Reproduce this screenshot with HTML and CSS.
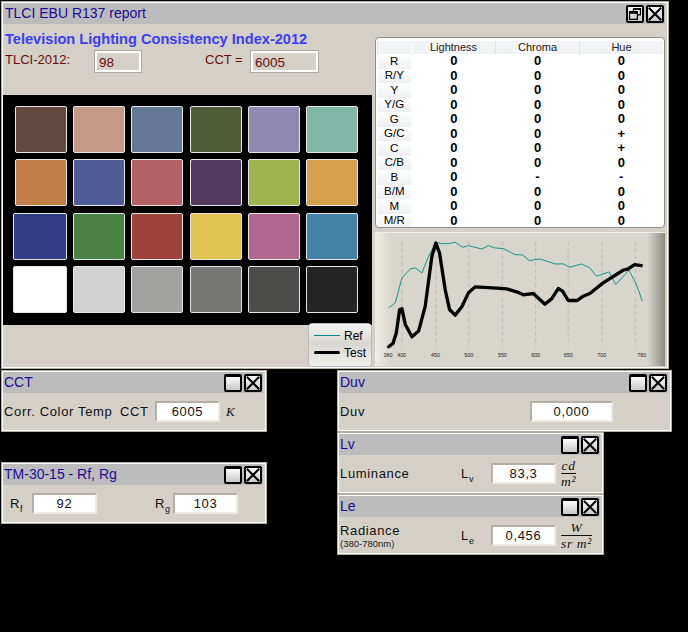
FILE: index.html
```html
<!DOCTYPE html>
<html lang="en">
<head>
    <meta charset="UTF-8">
    <title>TLCI EBU R137 report</title>
    <link rel="stylesheet" href="styles.css">
</head>
<body>

<!-- Main report window -->
<div class="win win-main">
  <div class="titlebar">
    <span class="title">TLCI EBU R137 report</span>
    <span class="btn"><svg viewBox="0 0 18 18"><path d="M7 2h9v8h-4M7 2v3M2 8h10v8H2zM2 8V6h10v2" fill="none" stroke="#000" stroke-width="1.6"/><path d="M7 2h9v2H7zM2 6h10v2H2z"/></svg></span>
    <span class="btn"><svg viewBox="0 0 18 18"><path d="M1 1l16 16M17 1L1 17" stroke="#000" stroke-width="2.6"/></svg></span>
  </div>
  <div class="main-body">
    <div class="left-col">
      <h1 class="heading">Television Lighting Consistency Index-2012</h1>
      <div class="score-row">
        <span class="score-label label-tlci">TLCI-2012:</span>
        <span class="score-box box-tlci">98</span>
        <span class="score-label label-cct">CCT =</span>
        <span class="score-box box-cct">6005</span>
      </div>
      <div class="chart-panel">
        <div class="swatch" style="background:#654b3f"></div>
        <div class="swatch" style="background:#c49a87"></div>
        <div class="swatch" style="background:#647896"></div>
        <div class="swatch" style="background:#4f5c38"></div>
        <div class="swatch" style="background:#8f88b0"></div>
        <div class="swatch" style="background:#80b7a7"></div>
        <div class="swatch" style="background:#c47d46"></div>
        <div class="swatch" style="background:#505c98"></div>
        <div class="swatch" style="background:#b46066"></div>
        <div class="swatch" style="background:#523a60"></div>
        <div class="swatch" style="background:#9fb44e"></div>
        <div class="swatch" style="background:#d4a04c"></div>
        <div class="swatch swatch-wide" style="background:#333c86"></div>
        <div class="swatch" style="background:#4b8246"></div>
        <div class="swatch" style="background:#9e423c"></div>
        <div class="swatch" style="background:#e2c250"></div>
        <div class="swatch" style="background:#b06890"></div>
        <div class="swatch" style="background:#4583a6"></div>
        <div class="swatch swatch-wide" style="background:#ffffff"></div>
        <div class="swatch" style="background:#d0d0d0"></div>
        <div class="swatch" style="background:#a2a2a0"></div>
        <div class="swatch" style="background:#767674"></div>
        <div class="swatch" style="background:#4c4c4a"></div>
        <div class="swatch" style="background:#252525"></div>
      </div>
    </div>
    <div class="right-col">
      <div class="table-panel">
        <table class="delta">
          <tr><th></th><th>Lightness</th><th>Chroma</th><th>Hue</th></tr>
          <tr><th>R</th><td>0</td><td>0</td><td>0</td></tr>
          <tr><th>R/Y</th><td>0</td><td>0</td><td>0</td></tr>
          <tr><th>Y</th><td>0</td><td>0</td><td>0</td></tr>
          <tr><th>Y/G</th><td>0</td><td>0</td><td>0</td></tr>
          <tr><th>G</th><td>0</td><td>0</td><td>0</td></tr>
          <tr><th>G/C</th><td>0</td><td>0</td><td>+</td></tr>
          <tr><th>C</th><td>0</td><td>0</td><td>+</td></tr>
          <tr><th>C/B</th><td>0</td><td>0</td><td>0</td></tr>
          <tr><th>B</th><td>0</td><td>-</td><td>-</td></tr>
          <tr><th>B/M</th><td>0</td><td>0</td><td>0</td></tr>
          <tr><th>M</th><td>0</td><td>0</td><td>0</td></tr>
          <tr><th>M/R</th><td>0</td><td>0</td><td>0</td></tr>
        </table>
      </div>
      <div class="spectrum">
        <svg viewBox="15 10 870 400" width="290" height="133">
          <g stroke="#b4b2ac" stroke-width="2.4" stroke-dasharray="12 9">
            <path d="M95 35V355M197 35V355M296 35V355M397 35V355M497 35V355M595 35V355M697 35V355M797 35V355"/>
          </g>
          <polyline class="line-ref" points="55,235 75,220 95,145 120,118 135,115 155,130 175,80 197,38 215,42 235,42 255,38 278,53 295,48 335,58 355,48 375,55 400,57 435,75 458,76 478,93 510,88 555,103 580,103 600,113 635,103 660,115 680,140 718,127 738,165 778,122 800,165 818,215"/>
          <polyline class="line-test" points="55,352 68,342 78,310 88,240 95,238 105,285 125,322 145,305 165,230 185,80 197,40 208,70 225,180 238,240 255,257 275,232 295,190 315,172 380,176 410,178 440,187 460,196 490,192 525,224 545,208 565,177 578,185 595,213 622,213 640,200 660,192 700,160 760,122 775,118 795,105 815,108"/>
          <g class="axis">
            <text x="53" y="384">380</text><text x="94" y="384">400</text><text x="196" y="384">450</text><text x="296" y="384">500</text><text x="397" y="384">550</text><text x="497" y="384">600</text><text x="595" y="384">650</text><text x="696" y="384">700</text><text x="816" y="384">780</text>
          </g>
        </svg>
      </div>
    </div>
  </div>
  <div class="legend">
    <div class="legend-row"><span class="key key-ref"></span><span>Ref</span></div>
    <div class="legend-row"><span class="key key-test"></span><span>Test</span></div>
  </div>
</div>

<!-- Small measurement windows -->
<div class="win win-cct">
  <div class="titlebar">
    <span class="title">CCT</span>
    <span class="btn btn-max"></span>
    <span class="btn"><svg viewBox="0 0 18 18"><path d="M1 1l16 16M17 1L1 17" stroke="#000" stroke-width="2.6"/></svg></span>
  </div>
  <div class="row">
    <span class="name name-cct">Corr. Color Temp</span>
    <span class="sym sym-cct">CCT</span>
    <span class="field">6005</span>
    <span class="unit-k">K</span>
  </div>
</div>

<div class="win win-tm">
  <div class="titlebar">
    <span class="title">TM-30-15 - Rf, Rg</span>
    <span class="btn btn-max"></span>
    <span class="btn"><svg viewBox="0 0 18 18"><path d="M1 1l16 16M17 1L1 17" stroke="#000" stroke-width="2.6"/></svg></span>
  </div>
  <div class="row">
    <span class="sym sym-rf">R<sub>f</sub></span>
    <span class="field">92</span>
    <span class="sym sym-rg">R<sub>g</sub></span>
    <span class="field">103</span>
  </div>
</div>

<div class="win win-duv">
  <div class="titlebar">
    <span class="title">Duv</span>
    <span class="btn btn-max"></span>
    <span class="btn"><svg viewBox="0 0 18 18"><path d="M1 1l16 16M17 1L1 17" stroke="#000" stroke-width="2.6"/></svg></span>
  </div>
  <div class="row">
    <span class="name name-duv">Duv</span>
    <span class="field field-duv">0,000</span>
  </div>
</div>

<div class="win win-lv">
  <div class="titlebar">
    <span class="title">Lv</span>
    <span class="btn btn-max"></span>
    <span class="btn"><svg viewBox="0 0 18 18"><path d="M1 1l16 16M17 1L1 17" stroke="#000" stroke-width="2.6"/></svg></span>
  </div>
  <div class="row">
    <span class="name name-lum">Luminance</span>
    <span class="sym sym-l">L<sub>v</sub></span>
    <span class="field">83,3</span>
    <span class="frac"><span class="num">cd</span><span>m²</span></span>
  </div>
</div>

<div class="win win-le">
  <div class="titlebar">
    <span class="title">Le</span>
    <span class="btn btn-max"></span>
    <span class="btn"><svg viewBox="0 0 18 18"><path d="M1 1l16 16M17 1L1 17" stroke="#000" stroke-width="2.6"/></svg></span>
  </div>
  <div class="row">
    <span class="name name-lum">Radiance<small>(380-780nm)</small></span>
    <span class="sym sym-l">L<sub>e</sub></span>
    <span class="field">0,456</span>
    <span class="frac"><span class="num">W</span><span>sr m²</span></span>
  </div>
</div>

</body>
</html>
```

FILE: styles.css
```css
body{
  margin:0;
  background-color:#000000;
  font-family:"Liberation Sans",Arial,sans-serif;
  color:#000;
}

/* windows sit on a free desktop */
.win{
  position:absolute;
  box-sizing:border-box;
  background-color:#d4d0c8;
  border:1px solid #fff;
  box-shadow:0 0 0 1px #b3ad9f;
}
.win-main{left:2px;top:2px;width:666px;height:366px;}
.win-cct{left:2px;top:371px;width:264px;height:60px;}
.win-tm{left:2px;top:463px;width:264px;height:60px;}
.win-duv{left:338px;top:371px;width:333px;height:60px;}
.win-lv{left:338px;top:433px;width:265px;height:60px;}
.win-le{left:338px;top:495px;width:265px;height:59px;}

.titlebar{
  display:flex;
  align-items:center;
  gap:2px;
  box-sizing:border-box;
  height:21px;
  margin-right:2px;
  padding:0 1px 0 0;
  background-color:#bcbcbc;
}
.title{
  flex:1;
  padding:0 0 2px 1px;
  font-size:14px;
  color:#1a0a96;
}
.win-main .title{padding-left:2px;}
.btn{
  box-sizing:border-box;
  width:18px;
  height:18px;
  border:2px solid #000;
  border-radius:2px;
  background:linear-gradient(#fdfdfd,#c8c8c8);
}
.btn svg{display:block;width:100%;height:100%;}
.btn-max{border-top-width:3px;}

/* main window */
.main-body{display:flex;gap:3px;}
.left-col{width:369px;}
.heading{
  margin:6px 0 0 2px;
  font-size:14.6px;
  line-height:18px;
  color:#3c3cf5;
}
.score-row{
  display:flex;
  align-items:flex-start;
  height:22px;
  margin-top:2px;
  color:#6a0c0c;
  font-size:13px;
}
.score-label{line-height:19px;}
.label-tlci{margin-left:2px;width:90px;}
.label-cct{margin-left:64px;width:46px;}
.score-box{
  box-sizing:border-box;
  height:21px;
  margin-top:1px;
  padding-left:2px;
  border:2px solid #fff;
  box-shadow:0 0 0 1px #aaa9a4;
  line-height:19px;
  font-size:13.5px;
}
.box-tlci{width:46px;}
.box-cct{width:67px;}

.chart-panel{
  display:grid;
  grid-template-columns:repeat(6,52px);
  grid-auto-rows:47px;
  column-gap:6.2px;
  row-gap:6.3px;
  box-sizing:border-box;
  height:230px;
  margin-top:23px;
  padding:11px 0 0 12px;
  background-color:#000;
}
.swatch{
  box-sizing:border-box;
  border:1px solid #e6e6e6;
  border-radius:2px;
}
.swatch-wide{margin-left:-2px;}

.right-col{width:290px;}
.table-panel{
  box-sizing:border-box;
  height:191px;
  margin-top:13px;
  padding:3px 1px 0;
  background-color:#fff;
  border:1px solid #8d8d8d;
  border-radius:4px;
  overflow:hidden;
}
.delta{
  width:100%;
  table-layout:fixed;
  border-collapse:collapse;
}
.delta tr{height:14.5px;}
.delta tr:first-child{height:13px;}
.delta th{
  width:83px;
  padding:0;
  font-size:11.5px;
  font-weight:normal;
  line-height:13px;
  background:linear-gradient(#fff,#eef0f2);
}
.delta th:first-child{width:33px;border-right:1px solid #fff;}
.delta tr:first-child th{
  font-size:11px;
  color:#222;
  border-left:1px solid #e2e3e6;
  background:#f2f3f5;
}
.delta td{
  padding:0;
  text-align:center;
  font-size:13px;
  font-weight:bold;
  line-height:14px;
}

.spectrum{
  height:133px;
  margin-top:4px;
  background:linear-gradient(90deg,#efece3,#d8d5cd 6%,#d8d5cd 94%,#8d8a82);
  border-top:1px solid #f0eee8;
}
.spectrum svg{display:block;}
.line-ref{fill:none;stroke:#0e8c8c;stroke-width:2.8;}
.line-test{fill:none;stroke:#000;stroke-width:10;stroke-linejoin:round;stroke-linecap:round;}
.axis text{font-size:16px;text-anchor:middle;fill:#222;}

.legend{
  position:absolute;
  left:305px;
  top:320px;
  box-sizing:border-box;
  width:64px;
  height:44px;
  padding:3px 5px;
  border:1px solid #b8b8b8;
  border-radius:4px;
  background:linear-gradient(#f6f6f4,#d8d7d2 45%,#f0efec);
  font-size:12px;
}
.legend-row{display:flex;align-items:center;gap:4px;height:17px;}
.key{display:block;width:26px;flex:none;}
.key-ref{height:1px;background-color:#0a8a8a;}
.key-test{height:3px;background-color:#000;border-radius:2px;}

/* small windows */
.row{
  display:flex;
  align-items:center;
  height:37px;
  font-size:13px;
  letter-spacing:.65px;
  color:#111;
}
.name-cct{margin-left:1px;width:116px;}
.sym-cct{width:35px;}
.name-duv{margin-left:1px;width:190px;}
.name-lum{margin-left:1px;width:120px;}
.name-lum small{display:block;font-size:9.5px;letter-spacing:0;color:#222;}
.sym{font-size:13px;}
.sym sub{font-size:9px;line-height:0;}
.sym-l{margin-left:1px;width:30px;}
.sym-rf{margin-left:7px;width:22px;}
.sym-rg{margin-left:58px;width:18px;}
.field{
  box-sizing:border-box;
  width:65px;
  height:21px;
  line-height:17px;
  text-align:center;
  background-color:#fff;
  border:2px solid;
  border-color:#b4b0a6 #ece9e2 #ece9e2 #b4b0a6;
}
.field-duv{width:83px;}
.unit-k{margin-left:6px;font-family:"Liberation Serif",serif;font-style:italic;}
.frac{
  display:flex;
  flex-direction:column;
  margin-left:5px;
  font-family:"Liberation Serif",serif;
  font-style:italic;
  font-size:13.5px;
  line-height:15.5px;
  text-align:center;
}
.frac .num{border-bottom:1px solid #111;}
```
